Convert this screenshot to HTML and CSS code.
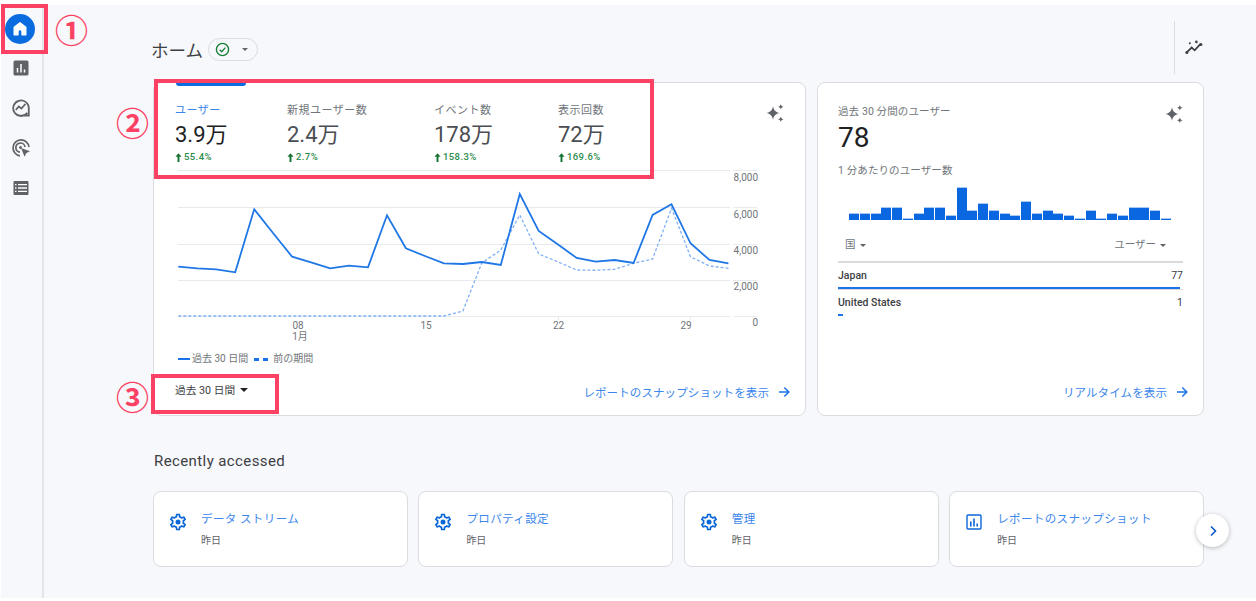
FILE: index.html
```html
<!DOCTYPE html>
<html lang="ja">
<head>
  <meta charset="UTF-8">
  <title>ホーム</title>
  <link rel="stylesheet" href="styles.css">
</head>
<body>

<svg class="defs" width="0" height="0">
  <symbol id="gear" viewBox="0 0 24 24">
    <path d="M19.43 12.98c.04-.32.07-.64.07-.98 0-.34-.03-.66-.07-.98l2.11-1.65c.19-.15.24-.42.12-.64l-2-3.46c-.09-.16-.26-.25-.44-.25-.06 0-.12.01-.17.03l-2.49 1c-.52-.4-1.08-.73-1.69-.98l-.38-2.65C14.46 2.18 14.25 2 14 2h-4c-.25 0-.46.18-.49.42l-.38 2.65c-.61.25-1.17.59-1.69.98l-2.49-1c-.06-.02-.12-.03-.18-.03-.17 0-.34.09-.43.25l-2 3.46c-.13.22-.07.49.12.64l2.11 1.65c-.04.32-.07.65-.07.98 0 .33.03.66.07.98l-2.11 1.65c-.19.15-.24.42-.12.64l2 3.46c.09.16.26.25.44.25.06 0 .12-.01.17-.03l2.49-1c.52.4 1.08.73 1.69.98l.38 2.65c.03.24.24.42.49.42h4c.25 0 .46-.18.49-.42l.38-2.65c.61-.25 1.17-.59 1.69-.98l2.49 1c.06.02.12.03.18.03.17 0 .34-.09.43-.25l2-3.46c.12-.22.07-.49-.12-.64l-2.11-1.65zm-1.98-1.71c.04.31.05.52.05.73 0 .21-.02.43-.05.73l-.14 1.13.89.7 1.08.84-.7 1.21-1.27-.51-1.04-.42-.9.68c-.43.32-.84.56-1.25.73l-1.06.43-.16 1.13-.2 1.35h-1.4l-.19-1.35-.16-1.13-1.06-.43c-.43-.18-.83-.41-1.23-.71l-.91-.7-1.06.43-1.27.51-.7-1.21 1.08-.84.89-.7-.14-1.13c-.03-.31-.05-.54-.05-.74s.02-.43.05-.73l.14-1.13-.89-.7-1.08-.84.7-1.21 1.27.51 1.04.42.9-.68c.43-.32.84-.56 1.25-.73l1.06-.43.16-1.13.2-1.35h1.39l.19 1.35.16 1.13 1.06.43c.43.18.83.41 1.23.71l.91.7 1.06-.43 1.27-.51.7 1.21-1.07.85-.89.7.14 1.13z"/>
    <circle cx="12" cy="12" r="3"/>
  </symbol>
  <symbol id="sparkle" viewBox="0 0 18 18">
    <path d="M7 2.200C7.600 6 9.600 8.300 13.800 9 9.600 9.700 7.600 12 7 15.800 6.400 12 4.400 9.700 .2 9 4.400 8.300 6.400 6 7 2.200z"/>
    <path d="M14.800 0c.3 1.600 1.100 2.400 2.800 2.800-1.700.4-2.500 1.200-2.800 2.800-.3-1.600-1.100-2.400-2.800-2.800 1.700-.4 2.500-1.200 2.800-2.800z"/>
    <path d="M14.800 12.400c.3 1.600 1.100 2.400 2.800 2.800-1.700.4-2.500 1.200-2.800 2.800-.3-1.600-1.100-2.400-2.800-2.800 1.700-.4 2.500-1.200 2.800-2.800z"/>
  </symbol>
  <symbol id="up" viewBox="0 0 8 10">
    <path d="M4 0 7.500 4H5.100v6H2.900V4H.5z"/>
  </symbol>
  <symbol id="arrow" viewBox="0 0 12 12">
    <path d="M1 6h9.500M6.300 1.500 10.800 6l-4.500 4.500" fill="none" stroke="currentColor" stroke-width="1.500"/>
  </symbol>
</svg>

<!-- Sidebar -->
<nav class="sidebar">
  <div class="nav-home">
    <svg viewBox="0 0 24 24" width="20" height="20"><path d="M12 4.500 5 10v9h4.600v-4a2.400 2.400 0 0 1 4.800 0v4H19v-9z" fill="#fff" stroke="#fff" stroke-width="1.600" stroke-linejoin="round"/></svg>
  </div>
  <div class="nav-item">
    <svg viewBox="0 0 16 16" width="16" height="16"><rect x=".5" y=".5" width="15" height="15" rx="1.500" fill="#5f6368"/><path d="M4.500 8v4.500M8 4v8.500M11.500 9.500v3" stroke="#fff" stroke-width="1.500"/></svg>
  </div>
  <div class="nav-item">
    <svg viewBox="0 0 18 18" width="18" height="18" fill="none" stroke="#5f6368" stroke-width="1.800"><path d="M15.300 13.800A7.800 7.800 0 1 1 16.800 9.200V16.500H9.500"/><path d="M3.800 11 6.800 7.500l2.600 2 4-4.500"/></svg>
  </div>
  <div class="nav-item">
    <svg viewBox="0 0 20 20" width="20" height="20" fill="none" stroke="#5f6368" stroke-width="1.700"><path d="M9 17.800A8 8 0 1 1 18 9"/><path d="M9 14.200A4.600 4.600 0 1 1 14 9"/><circle cx="9.500" cy="9.500" r="1.400" fill="#5f6368" stroke="none"/><path d="M10 10l9 3.200-3.600 1.800-1.800 3.800z" fill="#5f6368" stroke="none"/></svg>
  </div>
  <div class="nav-item">
    <svg viewBox="0 0 16 16" width="16" height="16"><rect x=".5" y="1" width="15" height="14" rx="1" fill="#5f6368"/><path d="M2 4.700h1.500M2 8h1.500M2 11.300h1.500M5 4.700h9M5 8h9M5 11.300h9" stroke="#fff" stroke-width="1.300"/></svg>
  </div>
</nav>

<main class="main">

  <div class="page-head">
    <div class="title">
      <h1>ホーム</h1>
      <div class="chip">
        <svg viewBox="0 0 16 16" width="15" height="15" fill="none" stroke="#188038" stroke-width="1.500"><circle cx="8" cy="8" r="6.500"/><path d="M5 8.200 7.200 10.300 11 6"/></svg>
        <span class="caret"></span>
      </div>
    </div>
    <div class="head-tools">
      <svg viewBox="0 0 20 16" width="19" height="15" fill="#3c4043"><path d="M1.500 13.500 7 8l3.200 3 6-6.500" fill="none" stroke="#3c4043" stroke-width="1.900"/><circle cx="1.800" cy="13.400" r="1.600"/><circle cx="16.800" cy="4.800" r="1.600"/><circle cx="5" cy="3.500" r="1.100"/><circle cx="12" cy="2" r="1.400"/></svg>
    </div>
  </div>

  <div class="cards">

    <section class="card card-main">
      <div class="tab-marker"></div>
      <div class="tabs">
        <div class="tab tab-active">
          <div class="tab-label">ユーザー</div>
          <div class="tab-value">3.9万</div>
          <div class="tab-delta"><svg width="7" height="9"><use href="#up"/></svg>55.4%</div>
        </div>
        <div class="tab tab-wide">
          <div class="tab-label">新規ユーザー数</div>
          <div class="tab-value">2.4万</div>
          <div class="tab-delta"><svg width="7" height="9"><use href="#up"/></svg>2.7%</div>
        </div>
        <div class="tab tab-mid">
          <div class="tab-label">イベント数</div>
          <div class="tab-value">178万</div>
          <div class="tab-delta"><svg width="7" height="9"><use href="#up"/></svg>158.3%</div>
        </div>
        <div class="tab">
          <div class="tab-label">表示回数</div>
          <div class="tab-value">72万</div>
          <div class="tab-delta"><svg width="7" height="9"><use href="#up"/></svg>169.6%</div>
        </div>
        <svg class="sparkle" width="18" height="18"><use href="#sparkle"/></svg>
      </div>

      <!-- viewBox uses page coordinates -->
      <svg class="chart" viewBox="154 166 651 179" width="651" height="179">
        <g class="grid">
          <path d="M178 170.500H730M178 207.500H730M178 244.500H730M178 280.500H730M178 316.500H730"/>
          <path d="M733 170.500H757M733 207.500H757M733 244.500H757M733 280.500H757M733 316.500H757"/>
          <path d="M558.500 316v4M690.500 316v4"/>
        </g>
        <polyline class="line-prev" points="178.3,316 197.3,316 216.2,316 235.2,316 254.2,316 273.2,316 292.1,316 311.1,316 330.1,316 349,316 368,316 387,316 405.9,316 424.9,316 443.9,316 462.9,311 481.8,263 500.8,250 519.8,215 538.7,254 557.7,261.700 576.700,270 595.600,270.300 614.600,269.300 633.600,263.300 652.600,259 671.500,208.300 690.500,256.700 709.500,266 728.400,268.300"/>
        <polyline class="line-now" points="178.3,266.700 197.3,268.300 216.2,269.300 235.2,272.300 254.2,209.300 273.2,233.300 292.1,256.700 311.1,262.300 330.1,268.300 349,265.700 368,267.300 387,215.300 405.9,248.300 424.9,256 443.9,263.300 462.9,264 481.8,262 500.8,265 519.8,194 538.700,231 557.700,244.300 576.700,258 595.600,261.700 614.600,260 633.600,263 652.600,215 671.500,204.300 690.500,243.300 709.500,260 728.400,263.300"/>
        <g class="axis-y">
          <text x="758" y="181">8,000</text>
          <text x="758" y="217.500">6,000</text>
          <text x="758" y="254">4,000</text>
          <text x="758" y="290">2,000</text>
          <text x="758" y="326">0</text>
        </g>
        <g class="axis-x">
          <text x="298" y="329">08</text>
          <text x="300" y="339.500">1月</text>
          <text x="426" y="329">15</text>
          <text x="558.500" y="329">22</text>
          <text x="686" y="329">29</text>
        </g>
      </svg>

      <div class="legend">
        <span class="key key-line"></span><span>過去 30 日間</span>
        <span class="key key-dash"></span><span>前の期間</span>
      </div>

      <div class="card-foot">
        <div class="range">過去 30 日間<span class="caret caret-dark"></span></div>
        <a class="link" href="#">レポートのスナップショットを表示<svg width="12" height="12"><use href="#arrow"/></svg></a>
      </div>
    </section>

    <section class="card card-side">
      <div class="side-top">
        <div class="side-label">過去 30 分間のユーザー</div>
        <svg class="sparkle" width="18" height="18"><use href="#sparkle"/></svg>
      </div>
      <div class="side-value">78</div>
      <div class="side-label side-sub">1 分あたりのユーザー数</div>
      <div class="bars">
        <i style="height:7.3px"></i><i style="height:7.3px"></i><i style="height:7.3px"></i><i style="height:12.7px"></i><i style="height:12.7px"></i><i style="height:2px"></i><i style="height:7.3px"></i><i style="height:12.7px"></i><i style="height:12.7px"></i><i style="height:4.7px"></i><i style="height:33.3px"></i><i style="height:10px"></i><i style="height:16.7px"></i><i style="height:10px"></i><i style="height:7.3px"></i><i style="height:4.7px"></i><i style="height:19.3px"></i><i style="height:7.3px"></i><i style="height:10px"></i><i style="height:7.3px"></i><i style="height:4.7px"></i><i style="height:2px"></i><i style="height:10px"></i><i style="height:2px"></i><i style="height:7.3px"></i><i style="height:4.7px"></i><i style="height:12.7px"></i><i style="height:12.7px"></i><i style="height:10px"></i><i style="height:2px"></i>
      </div>
      <div class="country-head">
        <span>国<span class="caret"></span></span>
        <span>ユーザー<span class="caret"></span></span>
      </div>
      <div class="country">
        <div class="country-row"><span>Japan</span><span class="country-num">77</span></div>
        <div class="country-bar"><div class="country-fill" style="width:99%"></div></div>
      </div>
      <div class="country">
        <div class="country-row"><span>United States</span><span class="country-num">1</span></div>
        <div class="country-bar country-bar-last"><div class="country-fill" style="width:1.5%"></div></div>
      </div>
      <div class="card-foot card-foot-end">
        <a class="link" href="#">リアルタイムを表示<svg width="12" height="12"><use href="#arrow"/></svg></a>
      </div>
    </section>

  </div>

  <h2 class="recent-title">Recently accessed</h2>
  <div class="recent">
    <div class="tile">
      <svg class="tile-icon" width="20" height="20"><use href="#gear"/></svg>
      <div><div class="tile-name">データ ストリーム</div><div class="tile-time">昨日</div></div>
    </div>
    <div class="tile">
      <svg class="tile-icon" width="20" height="20"><use href="#gear"/></svg>
      <div><div class="tile-name">プロパティ設定</div><div class="tile-time">昨日</div></div>
    </div>
    <div class="tile">
      <svg class="tile-icon" width="20" height="20"><use href="#gear"/></svg>
      <div><div class="tile-name">管理</div><div class="tile-time">昨日</div></div>
    </div>
    <div class="tile tile-report">
      <svg class="tile-icon" viewBox="0 0 16 16" width="16" height="16"><rect x="1" y="1" width="14" height="14" rx="1"/><path d="M4.800 7.500v5M8 4.500v8M11.200 9.500v3" stroke-width="1.600"/></svg>
      <div><div class="tile-name">レポートのスナップショット</div><div class="tile-time">昨日</div></div>
    </div>
    <button class="next">
      <svg viewBox="0 0 12 12" width="12" height="12" fill="none" stroke="#0b57d0" stroke-width="1.600"><path d="M4 1.500 8.500 6 4 10.500"/></svg>
    </button>
  </div>

</main>

<!-- Annotations -->
<div class="mark mark-home"></div>
<div class="mark mark-tabs"></div>
<div class="mark mark-range"></div>
<span class="num num-1">①</span>
<span class="num num-2">②</span>
<span class="num num-3">③</span>

</body>
</html>
```

FILE: styles.css
```css
* {
  box-sizing: border-box;
}

body {
  margin: 0;
  height: 601px;
  padding: 5px 0 3px 1px;
  overflow: hidden;
  position: relative;
  display: flex;
  font-family: Roboto, "Noto Sans CJK JP", sans-serif;
  color: #3c4043;
  background-color: #fff;
}

.defs {
  position: absolute;
}

a {
  text-decoration: none;
}

/* Sidebar */
.sidebar {
  width: 43px;
  flex-shrink: 0;
  padding: 9px 0 0 4px;
  border-right: 2px solid #e3e5e8;
  background-color: #f7f8fb;
}

.nav-home {
  width: 30px;
  height: 30px;
  border-radius: 50%;
  background-color: #0b6ce0;
  display: flex;
  align-items: center;
  justify-content: center;
}

.nav-item {
  width: 32px;
  height: 40px;
  display: flex;
  align-items: center;
  justify-content: center;
}

.nav-home + .nav-item {
  margin-top: 4px;
}

/* Main */
.main {
  flex: 1;
  padding: 16px 52px 0 109px;
  background-color: #f7f8fb;
}

.page-head {
  height: 53px;
  display: flex;
  justify-content: space-between;
}

.title {
  display: flex;
  align-items: center;
  margin: 4px 0 0 -2px;
}

.title h1 {
  margin: 0;
  font-size: 17.500px;
  font-weight: 400;
  color: #3c4043;
}

.chip {
  width: 50px;
  height: 23px;
  margin-left: 5px;
  padding: 0 9px 0 6px;
  display: flex;
  align-items: center;
  justify-content: space-between;
  border: 1px solid #dadce0;
  border-radius: 12px;
}

.caret {
  display: inline-block;
  width: 0;
  height: 0;
  border-left: 3.500px solid transparent;
  border-right: 3.500px solid transparent;
  border-top: 3.500px solid #5f6368;
}

.caret-dark {
  margin-left: 5px;
  border-left-width: 4.500px;
  border-right-width: 4.500px;
  border-top: 4.500px solid #202124;
}

.head-tools {
  width: 30px;
  padding-left: 10px;
  padding-top: 19px;
  border-left: 1px solid #dadce0;
}

.cards {
  margin-top: 8px;
  display: flex;
  gap: 11px;
  height: 334px;
}

.card {
  position: relative;
  display: flex;
  flex-direction: column;
  background-color: #fff;
  border: 1px solid #dadce0;
  border-radius: 8px;
}

.card-main {
  width: 653px;
}

.card-side {
  width: 387px;
  padding: 22px 20px 0;
}

.tab-marker {
  position: absolute;
  left: 22px;
  top: 0;
  width: 70px;
  height: 3px;
  background-color: #0b6ce0;
  border-radius: 0 0 3px 3px;
}

.tabs {
  height: 83px;
  padding: 21px 21px 0;
  display: flex;
  position: relative;
}

.tab {
  width: 100px;
}

.tab-active {
  width: 112px;
}

.tab-wide {
  width: 147px;
}

.tab-mid {
  width: 124px;
}

.tab-label {
  font-size: 11px;
  line-height: 14px;
  letter-spacing: .5px;
  color: #70757a;
}

.tab-active .tab-label {
  color: #3b86eb;
}

.tab-value {
  margin-top: 3px;
  font-size: 22px;
  line-height: 28px;
  color: #4a4d51;
}

.tab-active .tab-value {
  color: #202124;
}

.tab-delta {
  margin-top: 2px;
  font-size: 9.500px;
  line-height: 12px;
  font-weight: 500;
  letter-spacing: .4px;
  color: #2a8a4a;
  display: flex;
  align-items: center;
  gap: 2px;
}

.tab-delta svg {
  fill: #137333;
}

.sparkle {
  fill: #5f6368;
  flex-shrink: 0;
}

.tabs .sparkle {
  margin: 0 0 0 auto;
}

/* Chart */
.chart {
  display: block;
}

.grid path {
  fill: none;
  stroke: #e8eaed;
  stroke-width: 1;
}

.line-now {
  fill: none;
  stroke: #1f77e6;
  stroke-width: 1.800;
}

.line-prev {
  fill: none;
  stroke: #7fb0f3;
  stroke-width: 1.300;
  stroke-dasharray: 3 2;
}

.axis-y text,
.axis-x text {
  font-size: 10px;
  fill: #70757a;
}

.axis-y text {
  text-anchor: end;
}

.axis-x text {
  text-anchor: middle;
}

.legend {
  margin: 8px 0 0 24px;
  height: 12px;
  display: flex;
  align-items: center;
  font-size: 10px;
  line-height: 12px;
  color: #70757a;
}

.key {
  display: inline-block;
  width: 12px;
  height: 2px;
  margin-right: 2px;
  background-color: #1a73e8;
}

.key-dash {
  width: 14px;
  height: 3px;
  margin: 0 5px 0 6px;
  background: repeating-linear-gradient(90deg, #1a73e8 0 5px, transparent 5px 9px);
}

.card-foot {
  margin-top: auto;
  height: 47px;
  padding: 0 15px 0 21px;
  display: flex;
  align-items: center;
  justify-content: space-between;
}

.card-foot-end {
  margin: auto -20px 0;
  justify-content: flex-end;
}

.range {
  margin-bottom: 4px;
  font-size: 10.700px;
  color: #3c4043;
  display: flex;
  align-items: center;
}

.link {
  font-size: 11.500px;
  letter-spacing: .1px;
  color: #3b86eb;
  display: flex;
  align-items: center;
  gap: 9px;
}

.link svg {
  flex-shrink: 0;
  color: #1a73e8;
}

/* Realtime card */
.side-top {
  display: flex;
  justify-content: space-between;
  align-items: flex-start;
  height: 14px;
}

.side-label {
  font-size: 10.500px;
  line-height: 14px;
  letter-spacing: .1px;
  color: #70757a;
}

.side-value {
  margin-top: 3px;
  font-size: 28px;
  line-height: 32px;
  color: #202124;
}

.side-sub {
  margin-top: 10px;
}

.bars {
  margin: 8px 0 0 11px;
  width: 322px;
  height: 34px;
  display: flex;
  align-items: flex-end;
  gap: .7px;
}

.bars i {
  flex: 1;
  background-color: #0b67e0;
  border-top: 1px solid #a9c9f5;
}

.country-head {
  margin-top: 18px;
  padding: 0 17px 9px 7px;
  display: flex;
  justify-content: space-between;
  font-size: 10.500px;
  line-height: 14px;
  color: #70757a;
  border-bottom: 2px solid #d8dade;
}

.country-head .caret {
  margin: 0 0 1px 4px;
}

.country {
  margin-top: 6px;
}

.country-row {
  display: flex;
  justify-content: space-between;
  font-size: 10.500px;
  line-height: 14px;
  font-weight: 500;
}

.country-num {
  font-weight: 400;
}

.country-bar {
  margin-top: 4px;
  height: 3px;
  border-bottom: 1.500px solid #d8dade;
}

.country-bar-last {
  border-bottom: 0;
}

.country-fill {
  height: 1.500px;
  background-color: #1a73e8;
}

/* Recently accessed */
.recent-title {
  margin: 35px 0 0 1px;
  font-size: 15px;
  line-height: 20px;
  font-weight: 400;
  letter-spacing: .4px;
  color: #3c4043;
}

.recent {
  position: relative;
  margin-top: 20px;
  display: grid;
  grid-template-columns: repeat(4, 1fr);
  gap: 10.500px;
}

.tile {
  height: 76px;
  padding: 20px 0 0 14px;
  display: flex;
  gap: 13px;
  background-color: #fff;
  border: 1px solid #dadce0;
  border-radius: 8px;
}

.tile-icon {
  fill: #0b67d6;
  flex-shrink: 0;
}

.tile-report {
  padding-left: 16px;
  gap: 15px;
}

.tile-report .tile-icon {
  margin-top: 2px;
  fill: none;
  stroke: #0b67d6;
  stroke-width: 1.400px;
}

.tile-name {
  font-size: 11.500px;
  line-height: 14px;
  letter-spacing: .4px;
  color: #3b86eb;
}

.tile-time {
  margin-top: 8px;
  font-size: 10px;
  line-height: 14px;
  color: #5f6368;
}

.next {
  position: absolute;
  right: -25px;
  top: 23px;
  width: 33px;
  height: 33px;
  padding: 0;
  display: flex;
  align-items: center;
  justify-content: center;
  border: 0;
  border-radius: 50%;
  background-color: #fff;
  box-shadow: 0 1px 4px rgba(60, 64, 67, .35);
}

/* Annotations */
.mark {
  position: absolute;
  border: 4px solid #fb4264;
}

.mark-home {
  left: 1px;
  top: 4px;
  width: 47px;
  height: 50px;
}

.mark-tabs {
  left: 154px;
  top: 79px;
  width: 500px;
  height: 100px;
}

.mark-range {
  left: 151px;
  top: 374px;
  width: 128px;
  height: 40px;
}

.num {
  position: absolute;
  font-family: "Noto Sans CJK JP", sans-serif;
  font-size: 33px;
  line-height: 34px;
  font-weight: 700;
  color: #fb4264;
}

.num-1 {
  left: 55px;
  top: 12px;
}

.num-2 {
  left: 116px;
  top: 105px;
}

.num-3 {
  left: 116px;
  top: 379px;
}
```
